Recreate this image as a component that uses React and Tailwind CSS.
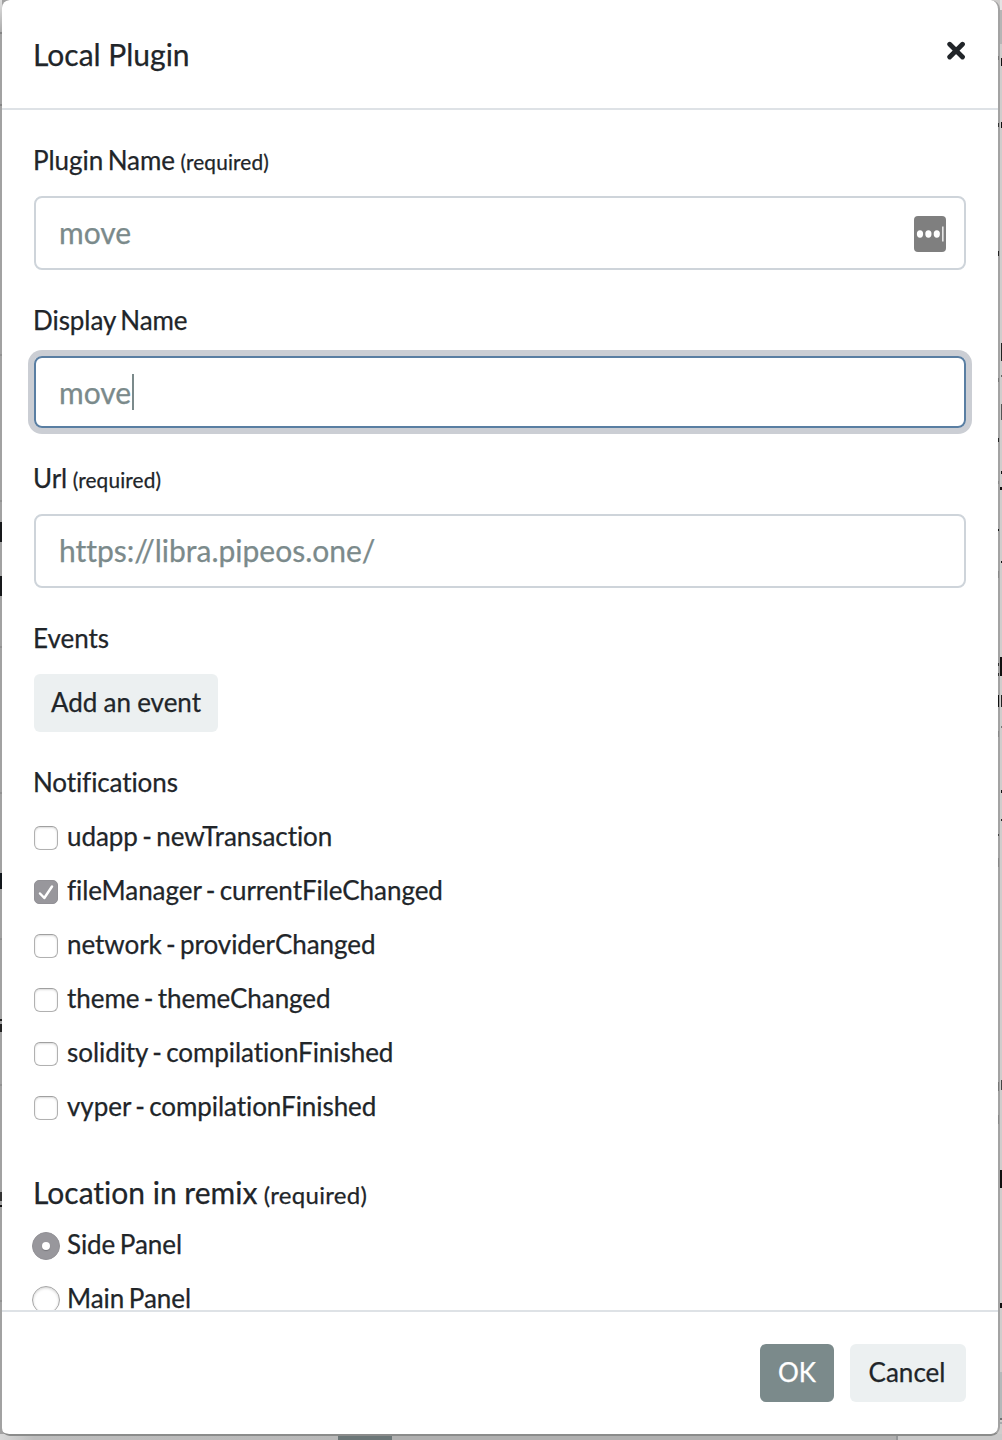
import React from "react";

const notifications = [
  { label: "udapp - newTransaction", checked: false },
  { label: "fileManager - currentFileChanged", checked: true },
  { label: "network - providerChanged", checked: false },
  { label: "theme - themeChanged", checked: false },
  { label: "solidity - compilationFinished", checked: false },
  { label: "vyper - compilationFinished", checked: false },
];

// Slivers of the page that peek out on either side of the dialog: [x, y, width, height, colour]
const slivers = [
  [0, 32, 2, 2, "#858585"], [0, 104, 2, 2, "#858585"], [0, 354, 2, 2, "#929292"], [0, 500, 2, 2, "#929292"],
  [0, 522, 2, 20, "#16181a"], [0, 576, 2, 20, "#16181a"],
  [0, 646, 2, 2, "#929292"], [0, 792, 2, 2, "#929292"], [0, 873, 2, 16, "#11161b"], [0, 938, 2, 2, "#929292"],
  [0, 1019, 2, 2, "#222"], [0, 1024, 2, 8, "#222"], [0, 1084, 2, 2, "#929292"], [0, 1192, 2, 9, "#333"],
  [0, 1205, 2, 2, "#111"], [0, 1300, 2, 2, "#929292"],
  [1000, 0, 2, 10, "#e4e4e4"], [1000, 10, 2, 34, "#b5b5b5"],
  [1001, 58, 1, 8, "#111"], [1001, 122, 1, 6, "#111"],
  [1001, 343, 1, 18, "#222"], [1001, 375, 1, 2, "#666"], [1001, 404, 1, 16, "#555"],
  [1001, 471, 1, 3, "#111"], [1000, 487, 2, 3, "#111"], [1001, 561, 1, 2, "#111"],
  [1000, 657, 2, 19, "#111"], [1001, 695, 1, 12, "#222"], [1001, 726, 1, 2, "#777"], [1001, 790, 1, 3, "#111"],
  [1001, 819, 1, 2, "#222"], [1001, 1080, 1, 10, "#444"], [1000, 1170, 2, 18, "#111"], [1000, 1303, 2, 5, "#111"],
  [1000, 1372, 2, 46, "#b4b9ba"], [998, 1418, 4, 2, "#6c7072"], [998, 1422, 4, 2, "#a5a9ab"],
];

// Dark glyph edges showing through the dialog's translucent border
const edgeMarks = [
  [56, 4, "#777"], [123, 4, "#333"], [251, 5, "#222"], [378, 4, "#777"], [438, 4, "#222"], [481, 3, "#888"],
  [529, 2, "#111"], [571, 7, "#888"], [663, 3, "#333"], [673, 3, "#333"], [695, 12, "#111"],
  [731, 6, "#888"], [834, 2, "#444"], [858, 9, "#888"], [1082, 9, "#777"], [1115, 9, "#888"],
];

function Field({ label, required, height, gap, focused, value, children }) {
  return (
    <div className="flex flex-col">
      <label className="-ml-px -mt-px h-[30px] leading-[30px] mb-[21px] text-[26px] tracking-[-0.06px] [word-spacing:-2px]">
        {label}
        {required && <small className="text-[20.8px] tracking-[0.15px] [word-spacing:0px]"> (required)</small>}
      </label>
      <div
        className={`flex items-center rounded-lg border-2 pl-[23px] pr-[18px] text-[30px] text-[#7b8a8b] ${height} ${gap} ${
          focused ? "border-[#597ea2] shadow-[0_0_0_6px_#cbced4]" : "border-[#ced4da]"
        }`}
      >
        <span className={focused ? "leading-9" : "-mt-0.5 leading-9"}>{value}</span>
        {focused && <span className="ml-px h-9 w-[2px] bg-[#7b8a8b]" />}
        {children}
      </div>
    </div>
  );
}

function CheckBox({ checked }) {
  return checked ? (
    <span className="mt-0.5 flex size-6 items-center justify-center rounded-[5px] border border-[#929196] bg-[#98979c]">
      <svg viewBox="0 0 24 24" className="size-6 shrink-0" fill="none" stroke="white" strokeWidth="2.5" strokeLinecap="round" strokeLinejoin="round">
        <path d="M6 13.5 10.3 18 18 6.5" />
      </svg>
    </span>
  ) : (
    <span className="mt-0.5 size-6 rounded-[6px] border border-[#b1b1b1] border-t-[#a0a0a0] bg-white shadow-[inset_0_1px_2px_#d9d9d9]" />
  );
}

function Radio({ checked }) {
  return checked ? (
    <span className="mt-0.5 flex size-7 items-center justify-center rounded-full border border-[#929196] bg-[#98979c]">
      <span className="size-2 rounded-full bg-white shadow-[0_1px_1px_#77767b]" />
    </span>
  ) : (
    <span className="mt-0.5 size-7 rounded-full border border-[#a6a6a6] bg-white shadow-[inset_0_1px_3px_#cfcfcf]" />
  );
}

export default function App() {
  return (
    <div className="relative h-[1440px] w-[1002px] overflow-hidden bg-[linear-gradient(to_right,#a2a2a2_0_500px,#cfcdcc_500px)] font-['Lato',sans-serif] text-[#212529] [font-variant-ligatures:none] [-webkit-text-stroke:0.25px]">
      {slivers.map(([x, y, w, h, c]) => (
        <i key={`${x}-${y}`} className="absolute" style={{ left: x, top: y, width: w, height: h, background: c }} />
      ))}
      <i className="absolute left-0 top-0 h-8 w-0.5 bg-gradient-to-b from-[#e0e0e0] to-[#ababab]" />
      <div className="absolute bottom-0 left-0 flex h-[6px] w-full bg-[#b0b0b0]">
        <span className="w-[338px] bg-gradient-to-r from-[#d8d8d8] via-[#bdbdbd] via-10% to-[#b9b9b9]" />
        <span className="w-[54px] bg-[#6c7778]" />
        <span className="w-[504px] bg-[#b0b0b0]" />
        <span className="w-[2px] bg-[#96989a]" />
        <span className="flex-1 bg-[#c9c9c9]" />
      </div>

      <section className="relative flex h-[1436px] w-[1000px] flex-col overflow-hidden rounded-[9px] border-r-2 border-b-2 border-r-[#a3a3a3] border-b-[#8b8c8b] bg-white bg-clip-padding [clip-path:inset(0_0_0_2px_round_8px)]">
        <header className="flex h-[110px] shrink-0 items-start justify-between border-b-2 border-[#dee2e6] pl-[33px] pr-[32px]">
          <h6 className="mt-9 text-[30px] leading-9">Local Plugin</h6>
          <svg viewBox="0 0 20 20" className="mt-10 size-5" fill="none" stroke="#212529" strokeWidth="4.8" strokeLinecap="round">
            <path d="M3.7 4.2 16.5 17M16.5 4.2 3.7 17" />
          </svg>
        </header>

        <main className="flex h-[1200px] shrink-0 flex-col overflow-hidden pl-[34px] pr-[32px] pt-9">
          <Field label="Plugin Name" required height="h-[74px]" gap="mb-9" value="move">
            <span className="ml-auto mt-0.5 flex h-9 w-8 items-center rounded bg-[#7f7f7f]">
              <svg viewBox="0 0 32 36" className="h-9 w-8" fill="white">
                <ellipse cx="6" cy="18" rx="3.1" ry="3.7" />
                <ellipse cx="14.4" cy="18" rx="3.1" ry="3.7" />
                <ellipse cx="22.8" cy="18" rx="3.1" ry="3.7" />
                <rect x="28.2" y="10.5" width="1.3" height="15" />
              </svg>
            </span>
          </Field>
          <Field label="Display Name" height="h-[72px]" gap="mb-9" focused value="move" />
          <Field label="Url" required height="h-[74px]" gap="mb-9" value="https://libra.pipeos.one/" />

          <div className="-ml-px -mt-px mb-[21px] h-[30px] text-[26px] leading-[30px]">Events</div>
          <button className="h-[58px] w-[184px] shrink-0 rounded-md bg-[#ecf0f1] pb-0.5 text-[26px] [word-spacing:-0.5px]">Add an event</button>

          <div className="-ml-px mt-[35px] mb-[13px] h-[30px] shrink-0 text-[26px] leading-[30px] tracking-[-0.1px]">Notifications</div>
          {notifications.map((n) => (
            <label key={n.label} className="flex h-[54px] shrink-0 items-center gap-[9px] text-[26px] tracking-[-0.06px] [word-spacing:-2.2px]">
              <CheckBox checked={n.checked} />
              <span className="-mt-0.5">{n.label}</span>
            </label>
          ))}

          <h6 className="-ml-px mt-10 mb-2 h-9 shrink-0 text-[30px] leading-9">
            Location in remix<small className="text-[24px] tracking-[0.3px]"> (required)</small>
          </h6>
          {["Side Panel", "Main Panel"].map((name, i) => (
            <label key={name} className="-ml-0.5 flex h-[54px] shrink-0 items-center gap-[7px] text-[26px] tracking-[-0.06px] [word-spacing:-2px]">
              <Radio checked={i === 0} />
              <span className="-mt-0.5">{name}</span>
            </label>
          ))}
        </main>

        <footer className="flex flex-1 items-start justify-end gap-4 border-t-2 border-[#dee2e6] pr-[32px] pt-8 text-[26px]">
          <button className="h-[58px] w-[74px] rounded-md bg-[#7b8a8b] pb-0.5 text-white">OK</button>
          <button className="h-[58px] w-[116px] rounded-md bg-[#ecf0f1] pb-0.5 pr-0.5">Cancel</button>
        </footer>
      </section>
      {edgeMarks.map(([y, h, c]) => (
        <i key={y} className="absolute left-[998px] w-px" style={{ top: y, height: h, background: c }} />
      ))}
    </div>
  );
}
